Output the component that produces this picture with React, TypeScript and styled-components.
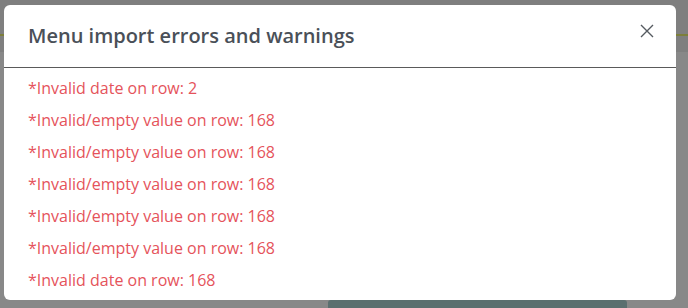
import { createGlobalStyle, styled } from "styled-components";

const GlobalStyle = createGlobalStyle`
  html, body {
    margin: 0;
    padding: 0;
    background: #858585;
    font-family: "Open Sans", "Liberation Sans", sans-serif;
    overflow: hidden;
  }
`;

const Page = styled.div`
  width: 688px;
  height: 308px;
  position: relative;
  background: #888888;
`;

const TopBar = styled.div`
  height: 52px;
  background: #7f7f7f;
  display: flex;
  flex-direction: column;
  justify-content: flex-start;
  padding-top: 34px;
  box-sizing: border-box;
`;

const OliveLine = styled.div`
  height: 2px;
  background: #7d7f3b;
`;

const Content = styled.div`
  display: flex;
  justify-content: flex-start;
  padding: 248px 0 0 328px;
`;

const SaveButton = styled.div`
  width: 299px;
  height: 20px;
  background: #5b6f6f;
  border-radius: 3px;
`;

const Backdrop = styled.div`
  position: absolute;
  inset: 0;
  padding: 5px 12px 0 4px;
`;

const Modal = styled.div`
  width: 672px;
  background: #ffffff;
  border-radius: 6px;
  display: flex;
  flex-direction: column;
`;

const Header = styled.div`
  display: flex;
  align-items: center;
  justify-content: space-between;
  padding: 16px 21px 16px 24px;
  border-bottom: 1px solid #5a5a5a;
`;

const Title = styled.h5`
  margin: 0;
  font-size: 20px;
  line-height: 30px;
  font-weight: 600;
  color: #4a5058;
`;

const CloseButton = styled.button`
  border: none;
  background: none;
  padding: 0;
  width: 16px;
  height: 16px;
  display: flex;
  align-items: center;
  justify-content: center;
  margin-top: -10px;
  cursor: pointer;
`;

const Body = styled.div`
  padding: 8px 24px;
  display: flex;
  flex-direction: column;
  gap: 8px;
`;

const ErrorLine = styled.div`
  font-size: 16px;
  line-height: 24px;
  color: #e5535b;
`;

const errors = [
  "*Invalid date on row: 2",
  "*Invalid/empty value on row: 168",
  "*Invalid/empty value on row: 168",
  "*Invalid/empty value on row: 168",
  "*Invalid/empty value on row: 168",
  "*Invalid/empty value on row: 168",
  "*Invalid date on row: 168",
];

export default function App() {
  return (
    <>
      <GlobalStyle />
      <Page>
        <TopBar>
          <OliveLine />
        </TopBar>
        <Content>
          <SaveButton />
        </Content>
        <Backdrop>
          <Modal>
            <Header>
              <Title>Menu import errors and warnings</Title>
              <CloseButton aria-label="close">
                <svg width="14" height="14" viewBox="0 0 14 14">
                  <path
                    d="M1 1L13 13M13 1L1 13"
                    stroke="#555a60"
                    strokeWidth="1.4"
                    fill="none"
                  />
                </svg>
              </CloseButton>
            </Header>
            <Body>
              {errors.map((err, i) => (
                <ErrorLine key={i}>{err}</ErrorLine>
              ))}
            </Body>
          </Modal>
        </Backdrop>
      </Page>
    </>
  );
}
